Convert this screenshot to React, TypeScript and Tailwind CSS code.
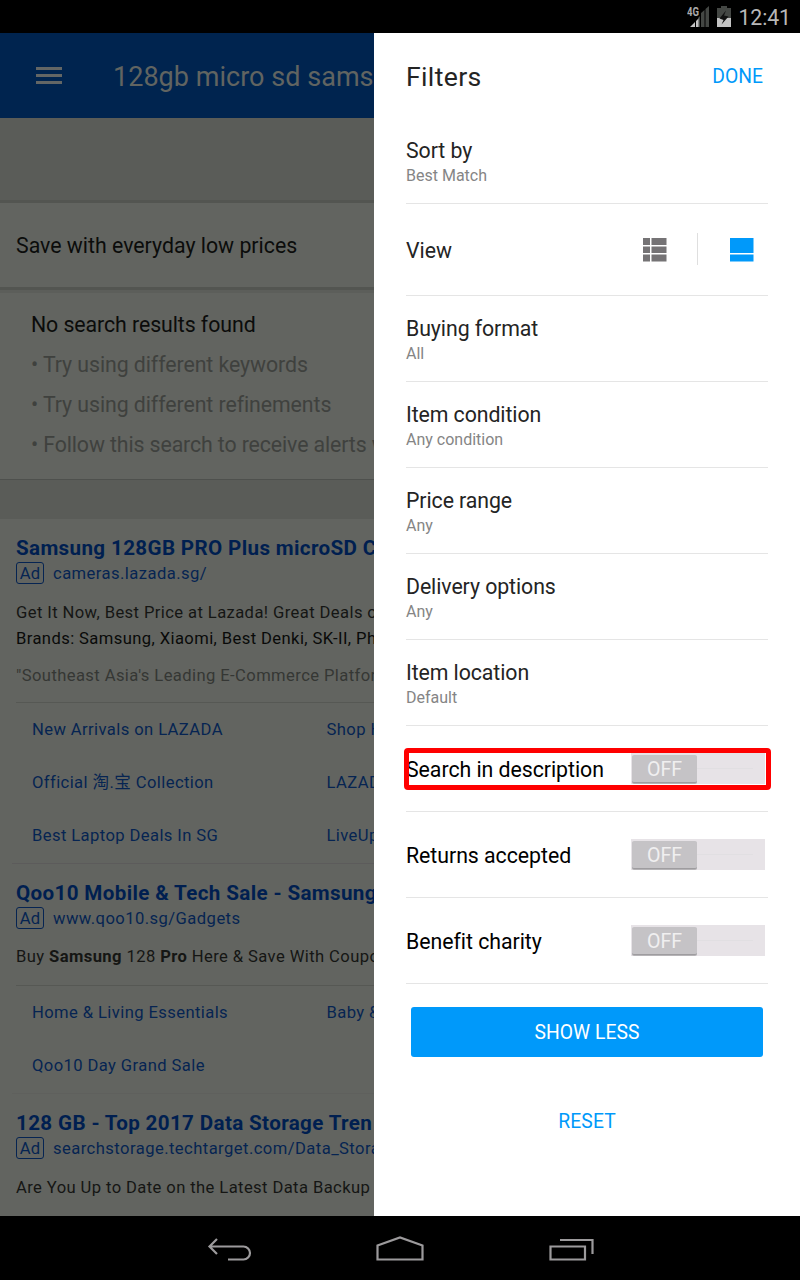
import React from "react";

function AdTitle({ children }: { children: React.ReactNode }) {
  return <h3 className="h-[26px] text-[20.6px] font-bold leading-[26px] tracking-[0.36px] text-[#001f50]">{children}</h3>;
}

function AdUrl({ children }: { children: React.ReactNode }) {
  return (
    <div className="mb-[-1px] mt-px flex h-[22px] items-center text-[16.6px] tracking-[0.44px] text-[#062452]">
      <span className="mr-[9px] flex h-[22px] w-7 shrink-0 items-center justify-center rounded-[3px] border border-[#062452] pt-0.5 leading-5 tracking-[0.2px]">
        Ad
      </span>
      <span className="pt-[3px]">{children}</span>
    </div>
  );
}

function Links({ rows }: { rows: [string, string][] }) {
  return (
    <div className="pt-px text-[16.6px] tracking-[0.4px] text-[#062452]">
      {rows.map(([a, b]) => (
        <div key={a} className="flex h-[53px] items-center pl-4">
          <span className="w-[294.5px] shrink-0">{a}</span>
          <span>{b}</span>
        </div>
      ))}
    </div>
  );
}

function Results() {
  return (
    <section className="flex w-[374px] shrink-0 flex-col overflow-hidden whitespace-nowrap bg-[#626460]">
      <header className="flex h-[85px] shrink-0 items-center bg-[#00244f]">
        <svg className="ml-9 mr-[51px] shrink-0" width="26" height="18" viewBox="0 0 26 18" fill="#636665">
          <path d="M0 0h26v3H0zM0 7h26v3H0zM0 14h26v3H0z" />
        </svg>
        <h1 className="pt-[3px] text-[27px] tracking-[0.03px] text-[#616461]">128gb micro sd sams</h1>
      </header>
      <div className="h-[85px] shrink-0 border-b-3 border-[#535551] bg-[#5a5c58]" />
      <div className="flex h-[84px] shrink-0 items-center pl-4 pt-0.5 text-[21.3px] text-[#0b0c0b]">Save with everyday low prices</div>
      <div className="h-[6px] shrink-0 border-t-3 border-[#535551] bg-[#5c5e5a]" />
      <div className="flex h-[186px] shrink-0 flex-col pl-[31px] pt-3 text-[21.3px] leading-10 tracking-[-0.07px] text-[#3f413e]">
        <div className="text-[#0b0c0b]">No search results found</div>
        <div>• Try using different keywords</div>
        <div>• Try using different refinements</div>
        <div className="tracking-[-0.11px]">• Follow this search to receive alerts w</div>
      </div>
      <div className="h-10 shrink-0 border-t border-[#4e504d] bg-[#5a5c58]" />
      <div className="flex h-[344px] shrink-0 flex-col pl-4 pt-4">
        <AdTitle>Samsung 128GB PRO Plus microSD C</AdTitle>
        <AdUrl>cameras.lazada.sg/</AdUrl>
        <p className="mt-[17px] text-[16.6px] leading-[26px] tracking-[0.4px] text-[#151614]">
          Get It Now, Best Price at Lazada! Great Deals o
          <br />
          <span className="text-[#090a09]">Brands: Samsung, Xiaomi, Best Denki, SK-II, Ph</span>
        </p>
        <p className="mb-[13px] mt-[11px] text-[16.6px] leading-[26px] tracking-[0.4px] text-[#353734]">
          "Southeast Asia's Leading E-Commerce Platfor
        </p>
        <div className="h-px shrink-0 bg-[#565854]" />
        <Links rows={[["New Arrivals on LAZADA", "Shop H"], ["Official 淘.宝 Collection", "LAZAD"], ["Best Laptop Deals In SG", "LiveUp"]]} />
      </div>
      <div className="ml-3 h-px shrink-0 bg-[#5c5b5b]" />
      <div className="flex h-[229px] shrink-0 flex-col pl-4 pt-4">
        <AdTitle>Qoo10 Mobile &amp; Tech Sale - Samsung</AdTitle>
        <AdUrl>www.qoo10.sg/Gadgets</AdUrl>
        <p className="mb-[15px] mt-4 text-[16.6px] leading-[26px] tracking-[0.4px] text-[#151614]">
          Buy <b>Samsung</b> 128 <b>Pro</b> Here &amp; Save With Coupo
        </p>
        <div className="h-px shrink-0 bg-[#565854]" />
        <Links rows={[["Home & Living Essentials", "Baby &"], ["Qoo10 Day Grand Sale", ""]]} />
      </div>
      <div className="ml-3 h-px shrink-0 bg-[#5f605d]" />
      <div className="flex flex-col pl-4 pt-4">
        <AdTitle>128 GB - Top 2017 Data Storage Tren</AdTitle>
        <AdUrl>searchstorage.techtarget.com/Data_Stora</AdUrl>
        <p className="mt-[17px] text-[16.6px] leading-[26px] tracking-[0.4px] text-[#151614]">Are You Up to Date on the Latest Data Backup</p>
      </div>
    </section>
  );
}

function Option({ title, value }: { title: string; value: string }) {
  return (
    <div className="flex h-[86px] shrink-0 flex-col border-b border-[#e5e5e5] pt-5">
      <div className="text-[21.3px] leading-[26px] tracking-[-0.08px] text-[#242424]">{title}</div>
      <div className="text-base leading-6 text-[#858585]">{value}</div>
    </div>
  );
}

function Toggle({ label, marked = false }: { label: string; marked?: boolean }) {
  return (
    <div className="relative flex h-[86px] shrink-0 items-center justify-between border-b border-[#e5e5e5] pr-[3px] text-[21.3px] tracking-[-0.04px] text-black">
      <span className="pt-[3px]">{label}</span>
      <span className="flex h-[31px] w-[134px] items-center bg-[#e7e3e7]">
        <span className="ml-px flex h-7 w-[65px] items-center justify-center rounded-[2px] border-b border-[#9e9c9f] bg-[#c5c3c6] pt-1 text-[19.6px] text-[#f0eff0] shadow-[0_1px_0_#b5b3b6]">
          OFF
        </span>
        <span className="h-px w-14 bg-[#e1dfe2]" />
      </span>
      {marked && <span className="absolute -left-0.5 top-[22px] h-[42px] w-[367px] rounded-[4px] border-5 border-[#ff0000]" />}
    </div>
  );
}

function Filters() {
  return (
    <aside className="flex flex-1 flex-col bg-white pl-8 pr-8">
      <header className="flex h-[85px] shrink-0 items-center justify-between pr-[5px] pt-0.5">
        <h2 className="text-[26.6px] tracking-[0.35px] text-[#242424]">Filters</h2>
        <button className="pt-0.5 text-[19.3px] text-[#0099fa]">DONE</button>
      </header>
      <Option title="Sort by" value="Best Match" />
      <div className="flex h-[92px] shrink-0 items-center border-b border-[#e5e5e5]">
        <span className="flex-1 pt-0.5 text-[21.3px] text-[#242424]">View</span>
        <svg width="24" height="24" viewBox="0 0 24 24" fill="#757375">
          <path d="M0 0h7v7H0zM8.5 0H23.500v7H8.500zM0 8.500h7v6.500H0zM8.500 8.500h15v6.500h-15zM0 16.500h7v7H0zM8.500 16.500h15v7h-15z" />
        </svg>
        <span className="mb-0.5 ml-[30px] mr-8 h-8 w-px bg-[#dfdfdf]" />
        <svg className="mr-[14px]" width="24" height="24" viewBox="0 0 24 24" fill="#0099fa">
          <path d="M0 0h23.500v15H0zM0 16.500h23.500v7H0z" />
        </svg>
      </div>
      <Option title="Buying format" value="All" />
      <Option title="Item condition" value="Any condition" />
      <Option title="Price range" value="Any" />
      <Option title="Delivery options" value="Any" />
      <Option title="Item location" value="Default" />
      <Toggle label="Search in description" marked />
      <Toggle label="Returns accepted" />
      <Toggle label="Benefit charity" />
      <button className="mx-[5px] mt-[23px] h-[50px] shrink-0 rounded-[3px] bg-[#0099fa] pt-[3px] text-[19.3px] tracking-[0.06px] text-white">SHOW LESS</button>
      <button className="mt-[52px] text-[19.3px] leading-[26px] tracking-[0.15px] text-[#0099fa]">RESET</button>
    </aside>
  );
}

export default function App() {
  return (
    <div className="flex h-[1280px] w-[800px] flex-col overflow-hidden bg-black font-['Roboto','Noto_Sans_CJK_SC',sans-serif]">
      <div className="flex h-[33px] shrink-0 items-center justify-end pr-[9px]">
        <svg className="mr-[5px]" width="46" height="24" viewBox="0 0 46 24">
          <path d="M11 22V13l2-2v11zM14 22V8l3.500-3v17zM18.500 22V4l3.500-3v21z" fill="#444744" />
          <path d="M3 22l5-5v5zM9 22v-6l2.500-2.500v8.500z" fill="#c4c4c4" />
          <text x="0" y="11" fontSize="12.5" fontWeight="700" textLength="12" lengthAdjust="spacingAndGlyphs" fill="#aaa">4G</text>
          <path d="M30 3h4V1h6v2h4v10H30z" fill="#444744" />
          <path d="M30 13h14v9H30z" fill="#c4c4c4" />
          <path d="M39 5.500l-6.500 8 4 1.500-2 4.500 7-8-4.500-1z" fill="#111" />
        </svg>
        <span className="pt-[3px] text-[21.3px] tracking-[-0.1px] text-[#b8b8b8]">12:41</span>
      </div>
      <main className="flex h-[1183px] shrink-0">
        <Results />
        <Filters />
      </main>
      <nav className="flex h-16 items-center">
        <svg width="800" height="64" viewBox="0 0 800 64" fill="none" stroke="#9c9a9c" strokeWidth="2.200">
          <path d="M217 23l-7.500 7.500 7.500 7.500M210 30.500h33.500a6.500 6.500 0 0 1 0 13H228" />
          <path d="M377.500 43.500v-14l22.500-8 22.500 8v14z" />
          <path d="M550.500 30.500h34.500v13h-34.500zM560 24h32.500v14" />
        </svg>
      </nav>
    </div>
  );
}
